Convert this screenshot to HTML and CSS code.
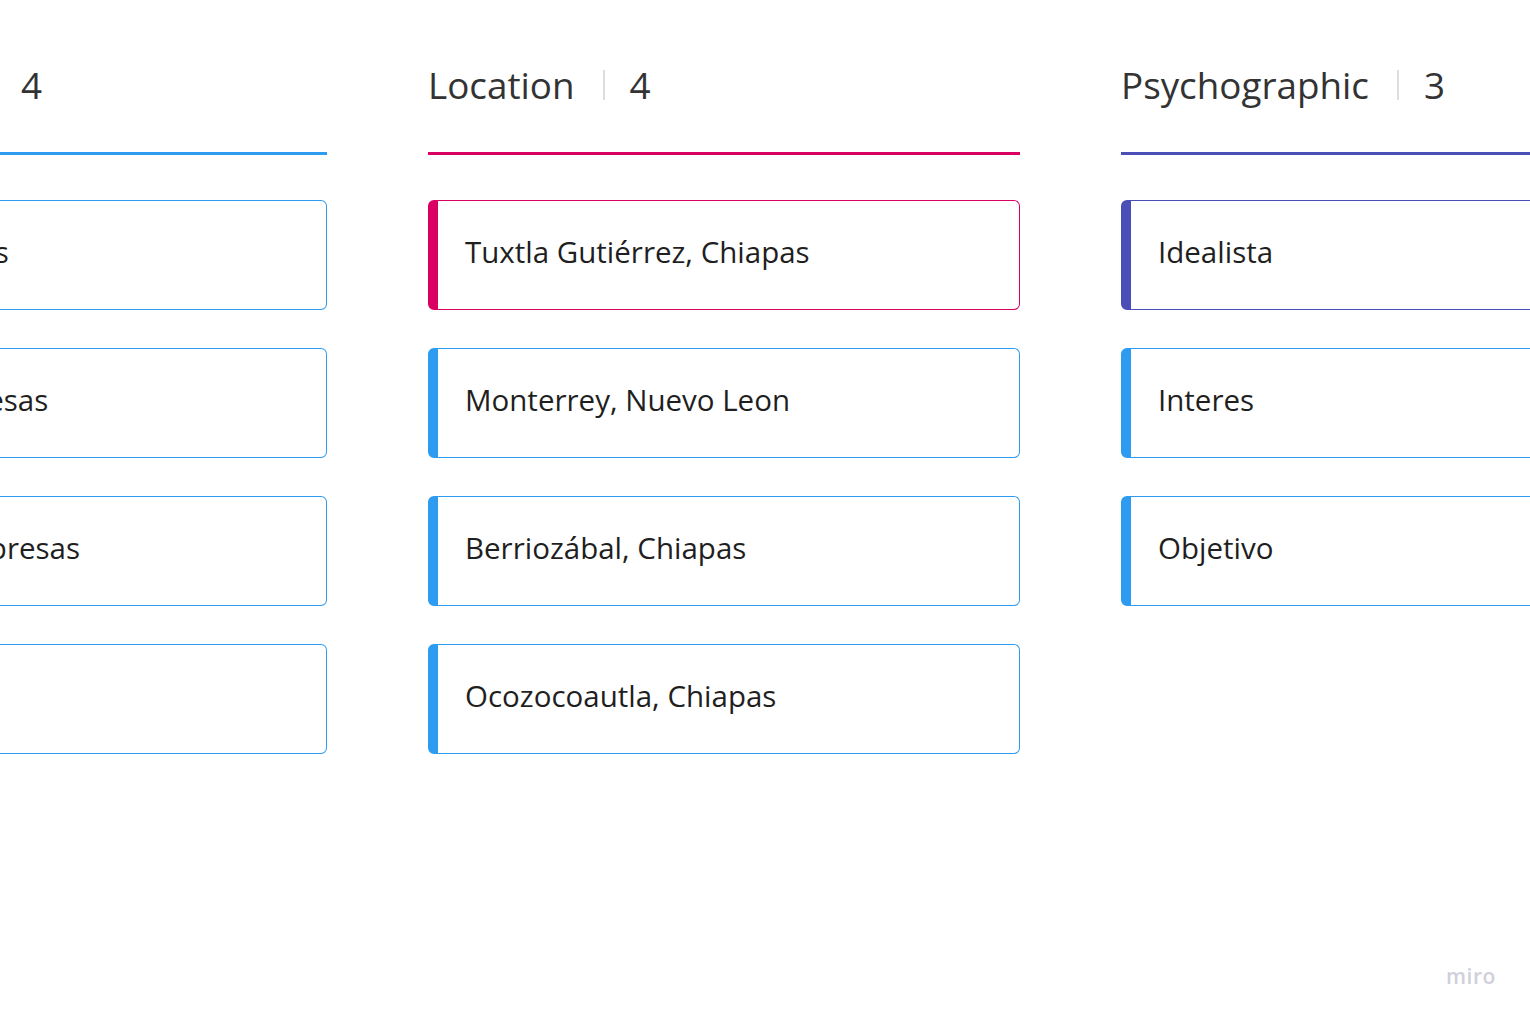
FILE: index.html
```html
<!DOCTYPE html>
<html lang="es">
<head>
<meta charset="utf-8">
<title>Board</title>
<link rel="stylesheet" href="styles.css">
</head>
<body>
<div class="board">
  <section class="column col-blue">
    <header class="col-head">
      <span class="col-title">Demographic</span>
      <span class="col-sep"></span>
      <span class="col-count">4</span>
    </header>
    <div class="cards">
      <div class="card card-blue"><span class="card-text">Agroempresarios</span></div>
      <div class="card card-blue"><span class="card-text">Medianas empresas</span></div>
      <div class="card card-blue"><span class="card-text">Gestores de empresas</span></div>
      <div class="card card-blue"><span class="card-text"></span></div>
    </div>
  </section>
  <section class="column col-pink">
    <header class="col-head">
      <span class="col-title">Location</span>
      <span class="col-sep"></span>
      <span class="col-count">4</span>
    </header>
    <div class="cards">
      <div class="card card-pink"><span class="card-text">Tuxtla Gutiérrez, Chiapas</span></div>
      <div class="card card-blue"><span class="card-text">Monterrey, Nuevo Leon</span></div>
      <div class="card card-blue"><span class="card-text">Berriozábal, Chiapas</span></div>
      <div class="card card-blue"><span class="card-text">Ocozocoautla, Chiapas</span></div>
    </div>
  </section>
  <section class="column col-indigo">
    <header class="col-head">
      <span class="col-title">Psychographic</span>
      <span class="col-sep"></span>
      <span class="col-count">3</span>
    </header>
    <div class="cards">
      <div class="card card-indigo"><span class="card-text">Idealista</span></div>
      <div class="card card-blue"><span class="card-text">Interes</span></div>
      <div class="card card-blue"><span class="card-text">Objetivo</span></div>
    </div>
  </section>
</div>
<div class="miro-logo">miro</div>
</body>
</html>
```
FILE: styles.css
```css
html, body {
  margin: 0;
  padding: 0;
  background: #ffffff;
  width: 1530px;
  height: 1020px;
  overflow: hidden;
  font-family: "Open Sans", "Noto Sans", sans-serif;
}

.board {
  display: flex;
  gap: 101px;
  margin-left: -265px;
}

.column {
  flex: 0 0 592px;
  width: 592px;
}

.col-head {
  box-sizing: border-box;
  height: 155px;
  padding-top: 60px;
  display: flex;
  align-items: flex-start;
  color: #333333;
  font-size: 36.8px;
  line-height: 50px;
  border-bottom: 3px solid #2d9bf0;
}

.col-blue .col-head { border-bottom-color: #2d9bf0; }
.col-pink .col-head { border-bottom-color: #da0063; }
.col-indigo .col-head { border-bottom-color: #4a4fb8; }

.col-title {
  white-space: nowrap;
}

.col-sep {
  width: 2px;
  height: 30px;
  margin: 10px 25px 0 28px;
  background: #dedede;
}

.col-count {
  white-space: nowrap;
}

.cards {
  display: flex;
  flex-direction: column;
  gap: 38px;
  margin-top: 45px;
}

.card {
  box-sizing: border-box;
  height: 110px;
  border: 1px solid #2d9bf0;
  border-left: 10px solid #2d9bf0;
  border-radius: 6px;
  display: flex;
  align-items: center;
  padding: 0 0 7px 27px;
  background: #ffffff;
}

.card-pink {
  border-color: #da0063;
}

.card-indigo {
  border-color: #4a4fb8;
}

.card-text {
  font-size: 29.5px;
  color: #1f1f1f;
  white-space: nowrap;
}

.miro-logo {
  position: absolute;
  left: 1446px;
  top: 962px;
  font-family: "Open Sans", sans-serif;
  font-weight: 600;
  font-size: 21px;
  letter-spacing: 0.5px;
  color: #d0d0da;
}
```
